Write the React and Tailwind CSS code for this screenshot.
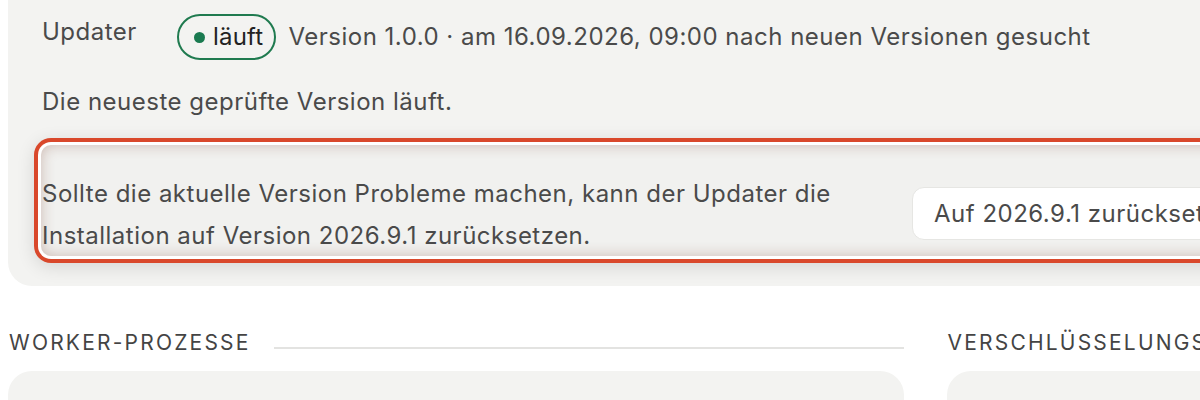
export default function App() {
  return (
    <div className="w-[1200px] h-[400px] overflow-hidden bg-white" style={{ fontFamily: "Inter, 'Noto Sans', sans-serif" }}>
      <div className="w-[1840px] pl-[8px]">
        <div className="-mt-[30px] rounded-[24px] bg-[#f3f3f1] pt-[44px] pb-[30px] pl-[26px] pr-[26px]">
          <div className="flex items-start pl-[8px]">
            <div className="w-[135px] text-[24px] tracking-[0.5px] leading-[36px] text-[#4a4a4a]">Updater</div>
            <div className="flex items-center gap-[12px]">
              <span className="flex h-[46px] items-center gap-[8px] rounded-full border-2 border-[#1f7a4f] pl-[15px] pr-[11px] text-[24px] tracking-[0.2px] text-[#222]">
                <span className="h-[11px] w-[11px] rounded-full bg-[#1a7a50]"></span>
                läuft
              </span>
              <span className="text-[24px] tracking-[0.5px] text-[#4a4a4a]">Version 1.0.0 · am 16.09.2026, 09:00 nach neuen Versionen gesucht</span>
            </div>
          </div>
          <div className="mt-[24px] pl-[8px] text-[24px] tracking-[0.5px] leading-[36px] text-[#4a4a4a]">Die neueste geprüfte Version läuft.</div>
          <div className="mt-[25px] ml-[7px] h-[111px] rounded-[10px] bg-[#f1f1ef] shadow-[inset_0_0_14px_rgba(120,55,35,0.30),0_0_0_3px_#ffffff,0_0_0_7px_#d9482b,0_4px_18px_7px_rgba(0,0,0,0.12)] flex items-start">
            <div className="mt-[28px] pl-[1px] w-[800px] text-[24px] tracking-[0.5px] leading-[42px] text-[#4a4a4a]">
              Sollte die aktuelle Version Probleme machen, kann der Updater die Installation auf Version 2026.9.1 zurücksetzen.
            </div>
            <button className="ml-[71px] mt-[42px] h-[53px] rounded-[12px] border border-[#e6e6e3] bg-white pl-[21px] pr-[24px] text-[24px] tracking-[0.5px] text-[#4a4a4a] whitespace-nowrap">
              Auf 2026.9.1 zurücksetzen
            </button>
          </div>
        </div>
        <div className="mt-[44px] flex gap-[41px]">
          <div className="w-[899px]">
            <div className="flex items-center gap-[23px] pl-[1px]">
              <span className="text-[21px] leading-[26px] tracking-[2.2px] text-[#444] whitespace-nowrap">WORKER-PROZESSE</span>
              <span className="mt-[10px] h-[2px] flex-1 bg-[#e3e3e1]"></span>
            </div>
            <div className="mt-[15px] h-[120px] rounded-[24px] bg-[#f3f3f1]"></div>
          </div>
          <div className="w-[899px] pl-[2px]">
            <div className="flex items-center gap-[23px] pl-[1px]">
              <span className="text-[21px] leading-[26px] tracking-[2.2px] text-[#444] whitespace-nowrap">VERSCHLÜSSELUNGSSCHLÜSSEL</span>
              <span className="mt-[10px] h-[2px] flex-1 bg-[#e3e3e1]"></span>
            </div>
            <div className="mt-[15px] h-[120px] rounded-[24px] bg-[#f3f3f1]"></div>
          </div>
        </div>
      </div>
    </div>
  );
}
